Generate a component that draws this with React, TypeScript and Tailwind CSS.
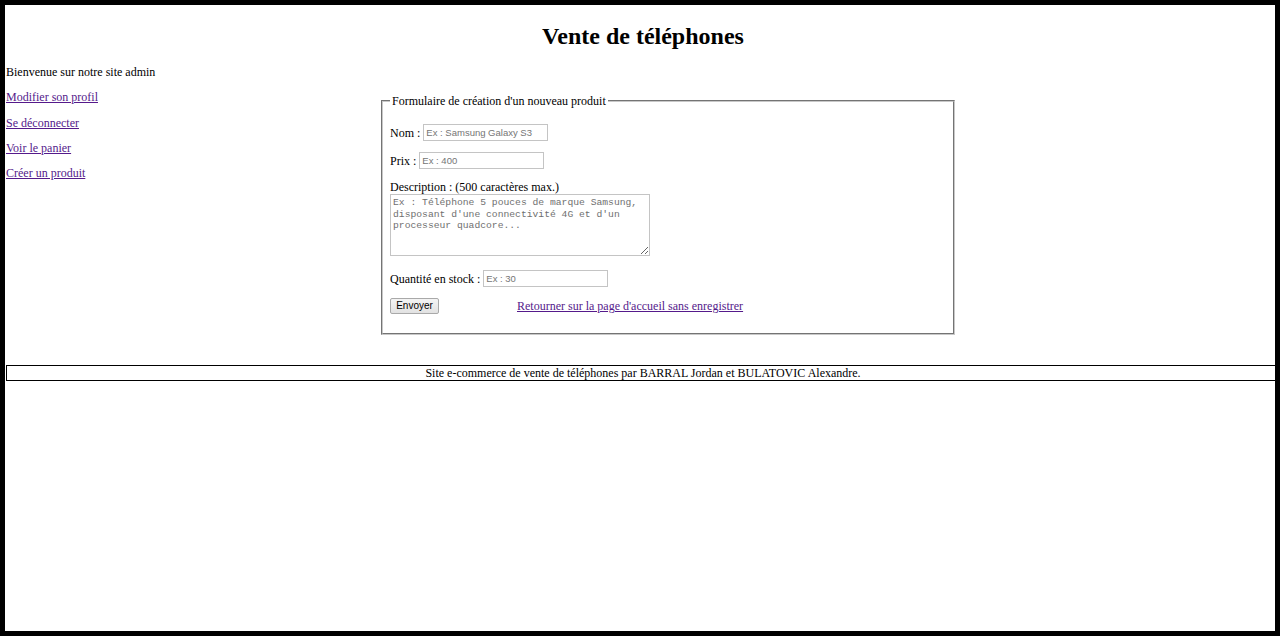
import React from "react";

export default function App() {
  const serif = { fontFamily: '"Liberation Serif", "Times New Roman", serif' };
  const sans = { fontFamily: '"Liberation Sans", Arial, sans-serif' };
  const inputCls =
    "ml-[3px] w-[125px] h-[17px] border border-[#c4c4c4] px-[2px] text-[9.5px] placeholder:text-[#757575] outline-none";
  return (
    <div
      className="w-[1280px] h-[636px] border-[5px] border-black overflow-hidden bg-white text-black text-[12px] leading-[14px]"
      style={serif}
    >
      <div className="ml-px w-[1274px]">
        <h1 className="text-center font-bold text-[24px] leading-[28px] pt-[17px]">
          Vente de téléphones
        </h1>
        <div className="flex items-start mt-[15px]">
          <div className="w-[375px] flex flex-col gap-[11.3px]">
            <p>Bienvenue sur notre site admin</p>
            <a href="#" className="underline text-[#551a8b] self-start">Modifier son profil</a>
            <a href="#" className="underline text-[#551a8b] self-start">Se déconnecter</a>
            <a href="#" className="underline text-[#551a8b] self-start">Voir le panier</a>
            <a href="#" className="underline text-[#551a8b] self-start">Créer un produit</a>
          </div>
          <fieldset className="mt-[29px] w-[574px] border-2 [border-style:groove] border-[#c8c8c8] pl-[7px] pr-[7px] pb-[19px]">
            <legend className="px-[2px] leading-[14px]">Formulaire de création d'un nouveau produit</legend>
            <div className="mt-[16px] flex items-center h-[17px]">
              <span>Nom :</span>
              <input className={inputCls} style={sans} placeholder="Ex : Samsung Galaxy S3" />
            </div>
            <div className="mt-[11px] flex items-center h-[17px]">
              <span>Prix :</span>
              <input className={inputCls} style={sans} placeholder="Ex : 400" />
            </div>
            <div className="mt-[11px]">Description : (500 caractères max.)</div>
            <textarea
              className="block w-[260px] h-[62px] border border-[#c4c4c4] px-[2px] pt-[2px] text-[9.7px] leading-[11.5px] placeholder:text-[#6f6f6f] outline-none"
              style={{ fontFamily: '"Liberation Mono", "DejaVu Sans Mono", monospace' }}
              placeholder={"Ex : Téléphone 5 pouces de marque Samsung, disposant d'une connectivité 4G et d'un processeur quadcore..."}
            />
            <div className="mt-[14px] flex items-center h-[17px]">
              <span>Quantité en stock :</span>
              <input className={inputCls} style={sans} placeholder="Ex : 30" />
            </div>
            <div className="mt-[11px] flex items-center h-[16px]">
              <button
                className="w-[49px] h-[16px] border border-[#a9a9a9] bg-gradient-to-b from-[#f4f4f4] to-[#e2e2e2] text-[10px] leading-[14px] text-black rounded-[2px]"
                style={sans}
              >
                Envoyer
              </button>
              <a href="#" className="ml-[78px] underline text-[#551a8b]">
                Retourner sur la page d'accueil sans enregistrer
              </a>
            </div>
          </fieldset>
        </div>
        <div className="mt-[30px] border border-black h-[16px] text-center leading-[14px]">
          Site e-commerce de vente de téléphones par BARRAL Jordan et BULATOVIC Alexandre.
        </div>
      </div>
    </div>
  );
}
